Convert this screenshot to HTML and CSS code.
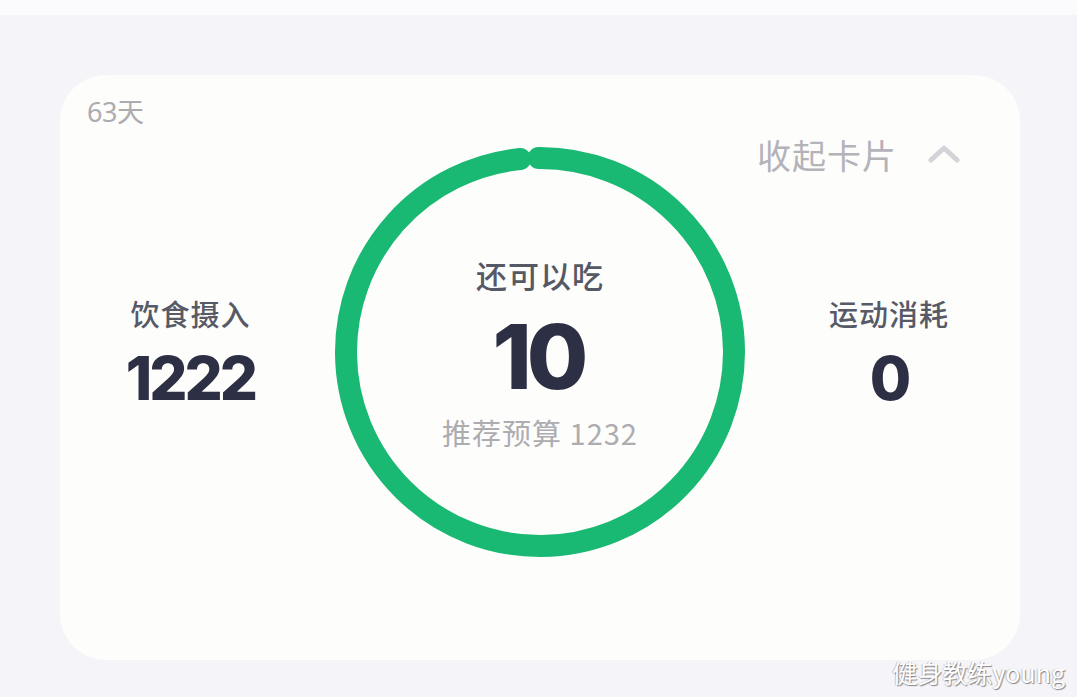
FILE: index.html
```html
<!DOCTYPE html>
<html lang="zh">
<head>
<meta charset="utf-8">
<link rel="stylesheet" href="styles.css">
</head>
<body>
<div class="page">
  <div class="topstrip"></div>
  <div class="card">
    <div class="card-head">63天</div>
    <div class="card-body">
      <div class="stat stat-left">
        <div class="stat-label">饮食摄入</div>
        <div class="stat-value">1222</div>
      </div>
      <div class="ring">
        <svg class="ring-svg" width="410" height="410" viewBox="0 0 410 410">
          <circle cx="205" cy="205" r="194" fill="none" stroke="#19b873" stroke-width="22" stroke-linecap="round" stroke-dasharray="1200 1300" transform="rotate(-90.4 205 205)"/>
        </svg>
        <div class="ring-center">
          <div class="ring-label">还可以吃</div>
          <div class="ring-value">10</div>
          <div class="ring-sub">推荐预算 1232</div>
        </div>
      </div>
      <div class="right-col">
        <div class="collapse">
          <span class="collapse-text">收起卡片</span>
          <svg class="chevron" width="32" height="20" viewBox="0 0 32 20"><path d="M3 16 L16 4 L29 16" fill="none" stroke="#d3d3d8" stroke-width="5" stroke-linecap="round" stroke-linejoin="round"/></svg>
        </div>
        <div class="stat stat-right">
          <div class="stat-label">运动消耗</div>
          <div class="stat-value">0</div>
        </div>
      </div>
    </div>
  </div>
  <div class="watermark">健身教练young</div>
</div>
</body>
</html>
```

FILE: styles.css
```css
* { box-sizing: border-box; }
html, body { margin: 0; padding: 0; }
body {
  width: 1077px;
  height: 697px;
  overflow: hidden;
  background: #f4f4f9;
  font-family: "Noto Sans CJK SC", "Noto Sans", sans-serif;
}
.page {
  position: relative;
  width: 1077px;
  height: 697px;
}
.topstrip {
  height: 15px;
  background: #fbfbfd;
}
.card {
  margin: 60px 0 0 60px;
  width: 960px;
  height: 585px;
  background: #fdfdfb;
  border-radius: 46px;
  padding: 20px 0 0 0;
}
.card-head {
  padding-left: 27px;
  font-size: 27px;
  line-height: 34px;
  color: #acacb0;
  font-family: "Noto Sans", "Noto Sans CJK SC", sans-serif;
  letter-spacing: -0.5px;
}
.card-body {
  margin-top: 18px;
  display: grid;
  grid-template-columns: 275px 410px 275px;
  height: 410px;
}
.stat {
  display: flex;
  flex-direction: column;
  align-items: center;
}
.stat-left {
  padding-top: 148px;
  padding-right: 14px;
}
.stat-label {
  font-size: 29px;
  line-height: 36px;
  color: #575a66;
  font-weight: 500;
  letter-spacing: 1px;
}
.stat-value {
  margin-top: 15px;
  font-family: "Inter", "Noto Sans", sans-serif;
  font-weight: 800;
  font-size: 60px;
  line-height: 64px;
  color: #2d2f45;
  letter-spacing: -3px;
}
.ring {
  position: relative;
  width: 410px;
  height: 410px;
  display: flex;
  flex-direction: column;
  align-items: center;
  padding-top: 108px;
}
.ring-svg {
  position: absolute;
  left: 0;
  top: 0;
}
.ring-center {
  display: flex;
  flex-direction: column;
  align-items: center;
}
.ring-label {
  font-size: 31px;
  line-height: 40px;
  color: #555966;
  font-weight: 500;
  letter-spacing: 1px;
}
.ring-value {
  font-family: "Inter", "Noto Sans", sans-serif;
  font-weight: 800;
  font-size: 89px;
  line-height: 96px;
  color: #2d2f45;
  letter-spacing: -5px;
  margin-top: 14px;
  padding-right: 4px;
}
.ring-sub {
  font-size: 29px;
  line-height: 36px;
  color: #acacb1;
  margin-top: 9px;
  letter-spacing: 1px;
}
.right-col {
  display: flex;
  flex-direction: column;
}
.collapse {
  display: flex;
  align-items: center;
  margin-top: -12px;
  padding-left: 12px;
  gap: 31px;
}
.collapse-text {
  font-size: 34px;
  line-height: 40px;
  color: #b3b3b9;
  letter-spacing: 1px;
}
.chevron { display: block; margin-top: -3px; }
.stat-right {
  margin-top: 120px;
  padding-left: 13px;
}
.watermark {
  position: absolute;
  right: 12px;
  bottom: 10px;
  font-size: 25px;
  line-height: 30px;
  color: #ffffff;
  text-shadow: 1px 1px 1px rgba(0,0,0,0.45), -1px 0 1px rgba(0,0,0,0.2);
}
```
